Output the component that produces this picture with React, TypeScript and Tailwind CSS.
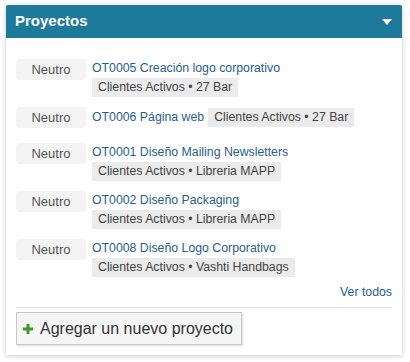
const proyectos = [
  { code: 'OT0005 Creación logo corporativo', tag: 'Clientes Activos • 27 Bar', inline: false },
  { code: 'OT0006 Página web', tag: 'Clientes Activos • 27 Bar', inline: true },
  { code: 'OT0001 Diseño Mailing Newsletters', tag: 'Clientes Activos • Libreria MAPP', inline: false },
  { code: 'OT0002 Diseño Packaging', tag: 'Clientes Activos • Libreria MAPP', inline: false },
  { code: 'OT0008 Diseño Logo Corporativo', tag: 'Clientes Activos • Vashti Handbags', inline: false },
]

const Tag = ({ text }: { text: string }) => (
  <span className="inline-block h-[19px] bg-[#ebebeb] px-[6px] leading-[19px] text-[#444]">{text}</span>
)

const App = () => {
  return (
    <div className="h-[362px] w-[410px] bg-white pt-[5px] pl-[6px] font-['Liberation_Sans',Arial,sans-serif] text-[12.3px]">
      <div className="w-[396px] bg-white shadow-[0_1px_5px_rgba(0,0,0,0.22)]">
        <div className="flex h-[33px] items-center justify-between rounded-t-[2px] bg-[#1e7a9b] pl-[9px] pr-[10px]">
          <h2 className="text-[15px] font-bold text-white">Proyectos</h2>
          <svg width="10" height="6" viewBox="0 0 10 6">
            <path d="M0 0 H10 L5 6 Z" fill="#fff" />
          </svg>
        </div>
        <div className="px-[10px] pt-[16px] pb-[10px]">
          {proyectos.map((p) => (
            <div key={p.code} className="flex items-start gap-[6px] py-[5px]">
              <span className="h-[21px] w-[70px] shrink-0 rounded-[4px] bg-[#f3f3f3] text-center text-[13px] leading-[21px] text-[#555]">
                Neutro
              </span>
              {p.inline ? (
                <div className="flex h-[26px] items-start gap-[4px] pt-[1px]">
                  <a className="leading-[19px] text-[#285e8e]" href="#">{p.code}</a>
                  <Tag text={p.tag} />
                </div>
              ) : (
                <div className="flex flex-col items-start">
                  <a className="leading-[19px] text-[#285e8e]" href="#">{p.code}</a>
                  <Tag text={p.tag} />
                </div>
              )}
            </div>
          ))}
          <div className="mt-[2px] text-right leading-[17px] text-[#285e8e]">Ver todos</div>
          <div className="mt-[6px] border-t border-[#dcdcdc]" />
          <button className="mt-[4px] flex h-[33px] items-center gap-[7px] border border-[#c8c8c8] bg-[#f5f5f5] pr-[8px] pl-[6px] text-[16px] text-[#333] shadow-[1px_1px_2px_rgba(0,0,0,0.15)]">
            <svg width="10" height="10" viewBox="0 0 10 10">
              <path d="M3.5 0 H6.5 V3.5 H10 V6.5 H6.5 V10 H3.5 V6.5 H0 V3.5 H3.5 Z" fill="#3c9b2b" />
            </svg>
            Agregar un nuevo proyecto
          </button>
        </div>
      </div>
    </div>
  )
}

export default App
